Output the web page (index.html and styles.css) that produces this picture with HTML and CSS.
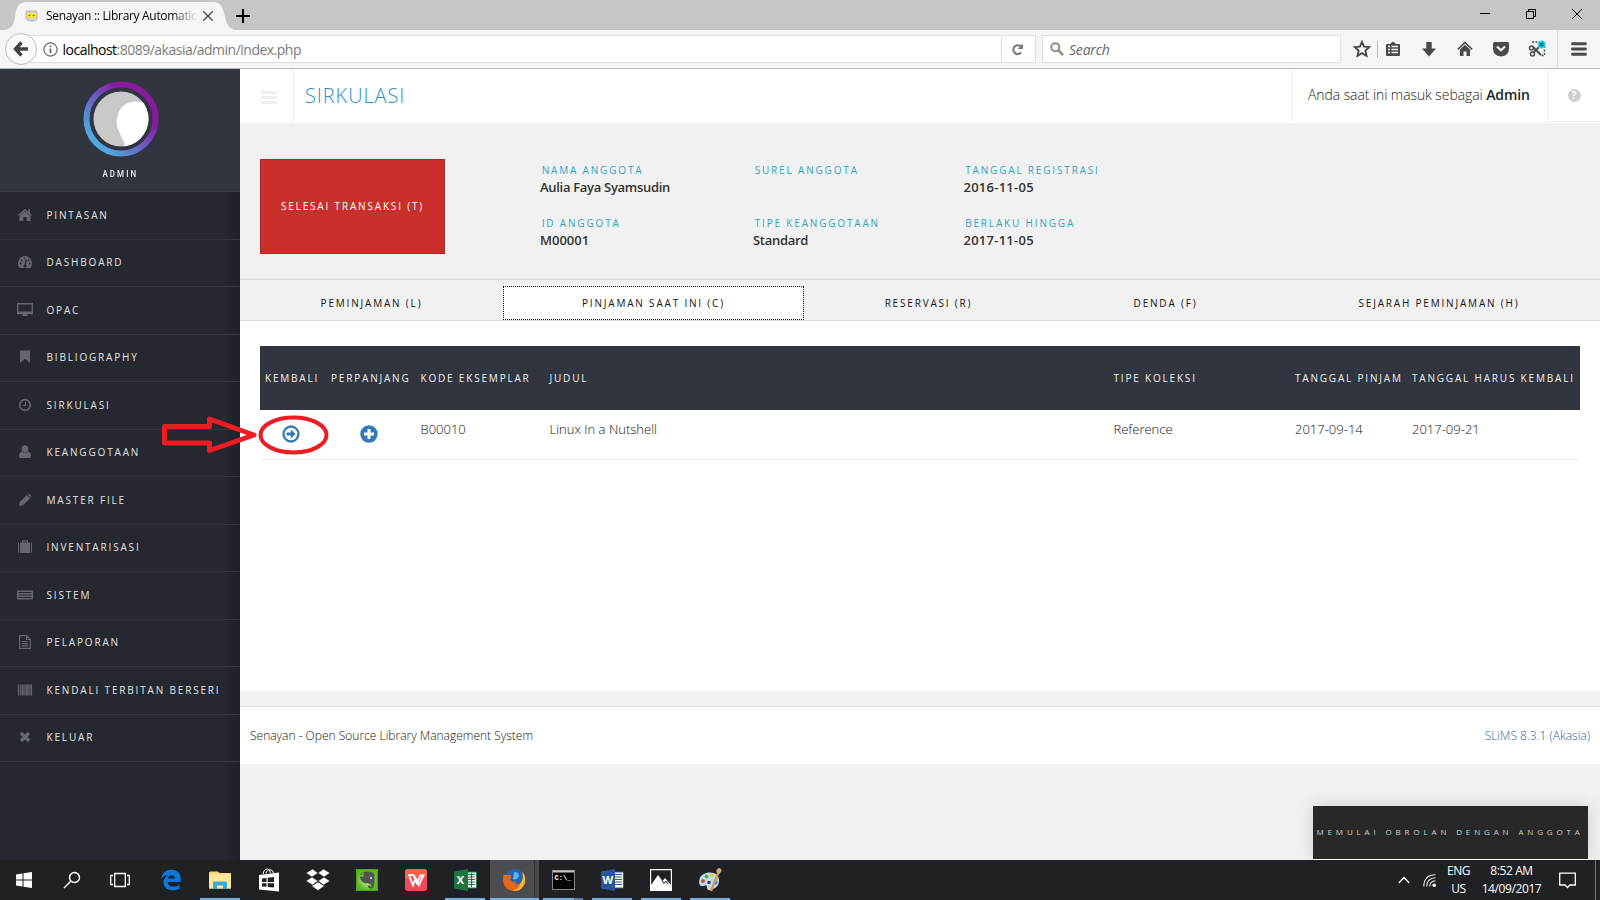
FILE: index.html
```html
<!DOCTYPE html>
<html lang="id">
<head>
<meta charset="utf-8">
<title>Senayan :: Library Automation</title>
<link rel="stylesheet" href="styles.css">
</head>
<body>
<div class="screen">

<header class="titlebar">
  <div class="tab">
    <svg class="tab-shape" width="234" height="30" viewBox="0 0 234 30"><path d="M4 30C12 29 14 24 15 17C16 8 18 2 27 2H213C221 2 223 8 225 17C227 25 229 29 237 30Z" fill="#f5f5f5"/></svg>
    <svg class="favicon" width="13" height="13" viewBox="0 0 13 13"><path d="M1 4Q1 1 3 2L10 2Q12 1 12 4V9Q12 12 6.500 12Q1 12 1 9Z" fill="#d8d3dc" stroke="#a9a3ae" stroke-width=".8"/><rect x="1.500" y="4" width="10" height="5" rx="2.300" fill="#f3ec22"/><circle cx="4.300" cy="6.500" r=".8" fill="#333"/><circle cx="8.700" cy="6.500" r=".8" fill="#333"/></svg>
    <span class="tab-title">Senayan :: Library Automatic</span>
    <svg class="tab-close" width="10" height="10" viewBox="0 0 10 10"><path d="M0 0L10 10M10 0L0 10" stroke="#444" stroke-width="1.300"/></svg>
  </div>
  <svg class="tab-new" width="14" height="14" viewBox="0 0 14 14"><path d="M7 0V14M0 7H14" stroke="#000" stroke-width="2.200"/></svg>
  <div class="window-buttons">
    <svg width="10" height="10" viewBox="0 0 10 10"><path d="M0 4.500H10" stroke="#000"/></svg>
    <svg width="10" height="10" viewBox="0 0 10 10"><path d="M.5 2.500H7.500V9.500H.5ZM2.500 2.500V.5H9.500V7.500H7.500" fill="none" stroke="#000"/></svg>
    <svg width="10" height="10" viewBox="0 0 10 10"><path d="M0 0L10 10M10 0L0 10" stroke="#000" stroke-width="1"/></svg>
  </div>
</header>

<nav class="navbar">
  <div class="back"><svg width="16" height="16" viewBox="0 0 16 16"><path d="M8.500 1.500L2.500 8L8.500 14.500M3 8H15" fill="none" stroke="#444" stroke-width="3.400"/></svg></div>
  <div class="address">
    <svg width="15" height="15" viewBox="0 0 15 15"><circle cx="7.500" cy="7.500" r="6.600" fill="none" stroke="#666" stroke-width="1.200"/><path d="M7.500 6.500V11M7.500 3.600V5.200" stroke="#666" stroke-width="1.700"/></svg>
    <span class="url"><b>localhost</b>:8089/akasia/admin/index.php</span>
    <div class="reload"><svg width="13" height="13" viewBox="0 0 13 13"><path d="M10.200 9.500A4.400 4.400 0 1 1 9.600 3.300" fill="none" stroke="#777" stroke-width="2.100"/><path d="M11.900 .6V6H6.600Z" fill="#777"/></svg></div>
  </div>
  <div class="search">
    <svg width="14" height="14" viewBox="0 0 14 14"><circle cx="5.300" cy="5.300" r="4" fill="none" stroke="#8d8d8d" stroke-width="2"/><path d="M8.200 8.200L13 13" stroke="#8d8d8d" stroke-width="2.600"/></svg>
    <span>Search</span>
  </div>
  <div class="tools">
    <svg width="18" height="18" viewBox="0 0 18 18"><path d="M9 1.800L11.100 6.600L16.200 7.100L12.400 10.600L13.500 15.800L9 13.100L4.500 15.800L5.600 10.600L1.800 7.100L6.900 6.600Z" fill="none" stroke="#4a4a4a" stroke-width="1.900"/></svg>
    <i class="sep"></i>
    <svg class="clip" width="18" height="18" viewBox="0 0 18 18"><path d="M2 5Q2 4 3 4H6L9 1.500L12 4H15Q16 4 16 5V15Q16 16 15 16H3Q2 16 2 15Z" fill="#4a4a4a"/><path d="M4 6.500H6M4 9.500H6M4 12.500H6M7.500 6.500H14M7.500 9.500H14M7.500 12.500H14" stroke="#f5f5f5" stroke-width="1.500"/></svg>
    <svg width="18" height="18" viewBox="0 0 18 18"><path d="M6.300 2H11.700V8.500H16L9 16.500L2 8.500H6.300Z" fill="#4a4a4a"/></svg>
    <svg width="18" height="18" viewBox="0 0 18 18"><path d="M1.800 9.500L9 2.500L16.200 9.500" fill="none" stroke="#4a4a4a" stroke-width="1.700"/><path d="M4 9.500L9 4.800L14 9.500V16H10.500V11.500H7.500V16H4Z" fill="#4a4a4a"/></svg>
    <svg width="18" height="18" viewBox="0 0 18 18"><path d="M2.500 2H15.500Q17 2 17 3.500V8Q17 16 9 16.500Q1 16 1 8V3.500Q1 2 2.500 2Z" fill="#4a4a4a"/><path d="M5 6.500L9 10.300L13 6.500" fill="none" stroke="#f5f5f5" stroke-width="2.200"/></svg>
    <svg width="18" height="18" viewBox="0 0 18 18"><path d="M4 2H12M16.500 6V15.500H13" fill="none" stroke="#4a4a4a" stroke-width="1.500" stroke-dasharray="2 1.500"/><path d="M5 7L13 15M12 6L5.500 12.500" stroke="#4a4a4a" stroke-width="1.900"/><circle cx="3.500" cy="8" r="2" fill="none" stroke="#4a4a4a" stroke-width="1.500"/><circle cx="4.500" cy="14" r="2" fill="none" stroke="#4a4a4a" stroke-width="1.500"/><circle cx="13.700" cy="4.500" r="4" fill="#25e0ee"/><path d="M13.700 1.800V7.200M11.300 3.200L16.100 5.800M16.100 3.200L11.300 5.800" stroke="#146a80" stroke-width="1.500"/></svg>
  </div>
  <div class="menu-button"><svg width="16" height="14" viewBox="0 0 16 14"><path d="M1.500 1.700H14.500M1.500 7H14.500M1.500 12.300H14.500" stroke="#4a4a4a" stroke-width="2.900" stroke-linecap="round"/></svg></div>
</nav>

<div class="page">
  <aside class="sidebar">
    <div class="user">
      <svg width="76" height="76" viewBox="0 0 76 76">
        <defs><linearGradient id="ring" x1=".15" y1=".85" x2=".8" y2=".2"><stop offset="0" stop-color="#4fa9e0"/><stop offset=".5" stop-color="#6a5cc0"/><stop offset=".85" stop-color="#8a1aa2"/></linearGradient><clipPath id="face"><circle cx="38" cy="38" r="27.500"/></clipPath></defs>
        <circle cx="38" cy="38" r="34.500" fill="none" stroke="url(#ring)" stroke-width="6"/>
        <circle cx="38" cy="38" r="27.500" fill="#c8c8c8"/>
        <path clip-path="url(#face)" d="M68 25Q57 19 48 21Q36 24 34.500 36Q33.500 39 33.500 42Q34 47 36 50Q38 57 41.500 61.500L41 68H70Z" fill="#fff"/>
      </svg>
      <span>ADMIN</span>
    </div>
    <ul class="menu">
      <li><svg viewBox="0 0 16 16"><path d="M8 4L13.500 9V14H9.700V10H6.300V14H2.500V9Z"/><path d="M1.500 8.500L8 2.800L14.500 8.500M12.300 2V6" fill="none" stroke="#64676d" stroke-width="1.500"/></svg>PINTASAN</li>
      <li><svg viewBox="0 0 16 16"><path d="M1 9A7 7 0 0 1 15 9Q15 12 13.500 14H2.500Q1 12 1 9Z"/><path d="M8 12L9.200 5.500" stroke="#25282f" stroke-width="1.300"/><g fill="#25282f"><circle cx="8" cy="12" r="1.500"/><circle cx="3.500" cy="9.500" r=".9"/><circle cx="4.700" cy="6.200" r=".9"/><circle cx="7.500" cy="4.300" r=".8"/><circle cx="11.600" cy="6.200" r=".9"/><circle cx="12.700" cy="9.500" r=".9"/></g></svg>DASHBOARD</li>
      <li><svg viewBox="0 0 16 16"><path d="M.7 1.700H15.300V11.500H.7Z" fill="none" stroke="#64676d" stroke-width="1.400"/><path d="M.7 9.500H15.300V12H.7ZM6 12H10L11 14H5Z"/></svg>OPAC</li>
      <li><svg viewBox="0 0 16 16"><path d="M3 1.500H13V14L8 9.700L3 14Z"/></svg>BIBLIOGRAPHY</li>
      <li><svg viewBox="0 0 16 16"><circle cx="8" cy="8" r="5.300" fill="none" stroke="#64676d" stroke-width="1.700"/><path d="M8.500 4.800V8.500H5.800" fill="none" stroke="#64676d" stroke-width="1.200"/></svg>SIRKULASI</li>
      <li><svg viewBox="0 0 16 16"><ellipse cx="8" cy="5" rx="3.300" ry="3.800"/><path d="M4.800 7.500Q8 10.500 11.200 7.500Q14 8.500 14 12Q14 14 12 14H4Q2 14 2 12Q2 8.500 4.800 7.500Z"/></svg>KEANGGOTAAN</li>
      <li><svg viewBox="0 0 16 16"><path d="M2 14L2.700 10L9.800 3L13 6.200L6 13.200ZM10.600 2.200Q11.600 1.200 12.600 2.200L13.800 3.400Q14.800 4.400 13.800 5.400Z"/></svg>MASTER FILE</li>
      <li><svg viewBox="0 0 16 16"><path d="M1 4Q1 3.500 2 3.500V14Q1 14 1 13ZM3 3.500H5V1.300H11V3.500H13V14H3ZM14 3.500Q15 3.500 15 4V13Q15 14 14 14ZM6.200 2.500V3.500H9.800V2.500Z" fill-rule="evenodd"/></svg>INVENTARISASI</li>
      <li><svg viewBox="0 0 16 16"><path d="M0 3.500H16V12.500H0Z"/><path d="M1.500 5.500H14.500M1.500 8H14.500M1.500 10.500H14.500" stroke="#25282f" stroke-width="1"/></svg>SISTEM</li>
      <li><svg viewBox="0 0 16 16"><path d="M2.600 1.600H9.500L13.400 5.500V14.400H2.600ZM9.500 1.600V5.500H13.400M5 7.500H11M5 9.700H11M5 11.900H11" fill="none" stroke="#64676d" stroke-width="1.200"/></svg>PELAPORAN</li>
      <li><svg viewBox="0 0 16 16"><path d="M1.500 2.500V13.500M3.700 2.500V13.500M8 2.500V13.500M12 2.500V13.500" stroke="#64676d" stroke-width="1.300"/><path d="M5.800 2.500V13.500M10 2.500V13.500M14.200 2.500V13.500" stroke="#64676d" stroke-width="1.700"/></svg>KENDALI TERBITAN BERSERI</li>
      <li><svg viewBox="0 0 16 16"><path d="M4 4L12 12M12 4L4 12" stroke="#64676d" stroke-width="3.600"/></svg>KELUAR</li>
    </ul>
  </aside>

  <main class="main">
    <div class="topbar">
      <div class="toggle"><i></i><i></i><i></i></div>
      <h1>SIRKULASI</h1>
      <div class="login">Anda saat ini masuk sebagai <b>Admin</b></div>
      <div class="help"><span>?</span></div>
    </div>
    <section class="member">
      <button class="finish">SELESAI TRANSAKSI (T)</button>
      <dl class="info">
        <div><dt>NAMA ANGGOTA</dt><dd>Aulia Faya Syamsudin</dd></div>
        <div><dt>SUREL ANGGOTA</dt><dd></dd></div>
        <div><dt>TANGGAL REGISTRASI</dt><dd class="num">2016-11-05</dd></div>
        <div><dt>ID ANGGOTA</dt><dd class="code">M00001</dd></div>
        <div><dt>TIPE KEANGGOTAAN</dt><dd>Standard</dd></div>
        <div><dt>BERLAKU HINGGA</dt><dd class="num">2017-11-05</dd></div>
      </dl>
    </section>
    <div class="tabs">
      <a>PEMINJAMAN (L)</a><a class="active">PINJAMAN SAAT INI (C)</a><a>RESERVASI (R)</a><a>DENDA (F)</a><a>SEJARAH PEMINJAMAN (H)</a>
    </div>
    <section class="loans">
      <div class="row head"><span>KEMBALI</span><span>PERPANJANG</span><span>KODE EKSEMPLAR</span><span>JUDUL</span><span>TIPE KOLEKSI</span><span>TANGGAL PINJAM</span><span>TANGGAL HARUS KEMBALI</span></div>
      <div class="row item">
        <span class="act"><svg width="18" height="18" viewBox="0 0 18 18"><circle cx="9" cy="9" r="7.500" fill="none" stroke="#337ab7" stroke-width="2.300"/><path d="M4.500 7.500H8.800V4.600L13.600 9L8.800 13.400V10.500H4.500Z" fill="#337ab7"/></svg></span>
        <span class="act"><svg width="18" height="18" viewBox="0 0 18 18"><circle cx="9" cy="9" r="8.700" fill="#337ab7"/><path d="M9 4V14M4 9H14" stroke="#fff" stroke-width="3"/></svg></span>
        <span>B00010</span><span>Linux In a Nutshell</span><span>Reference</span><span>2017-09-14</span><span>2017-09-21</span>
      </div>
    </section>
    <footer class="footer"><span>Senayan - Open Source Library Management System</span><a>SLiMS 8.3.1 (Akasia)</a></footer>
  </main>

  <div class="chat">MEMULAI OBROLAN DENGAN ANGGOTA</div>
</div>

<div class="taskbar">
  <div class="cell sys"><svg width="18" height="18" viewBox="0 0 18 18"><path d="M1 3.500L7.500 2.500V8.500H1ZM8.500 2.300L17 1V8.500H8.500ZM1 9.500H7.500V15.500L1 14.500ZM8.500 9.500H17V17L8.500 15.700Z" fill="#fff"/></svg></div>
  <div class="cell sys"><svg width="18" height="18" viewBox="0 0 18 18"><circle cx="11.500" cy="6.500" r="5" fill="none" stroke="#fff" stroke-width="1.400"/><path d="M8 10L1 17" stroke="#fff" stroke-width="1.500"/></svg></div>
  <div class="cell sys"><svg width="20" height="16" viewBox="0 0 20 16"><path d="M4.700 1.500H15.300V14.500H4.700ZM3 3.500H.7V12.500H3M17 3.500H19.300V12.500H17" fill="none" stroke="#fff" stroke-width="1.300"/></svg></div>
  <div class="cell first"><svg width="22" height="22" viewBox="0 0 22 22"><path d="M1 10C2 4 6 .8 11.500 .8C18 .8 21 5.500 20.800 11V13H7.800C8 18 14 19 19.500 16V20C12 23 3.500 21 3.500 13.500C3.500 9.500 6 7 8.500 6C4.500 6 2.500 8 1 10ZM8 9.500H14.800C14.800 5 9 5 8 9.500Z" fill="#0a78d6" fill-rule="evenodd"/></svg></div>
  <div class="cell run"><svg width="22" height="18" viewBox="0 0 22 18"><path d="M0 2Q0 .5 1.500 .5H9L10.500 2H22V17.500H0Z" fill="#fbd978"/><path d="M1 3H22V17.500H0V4Z" fill="#fee79a"/><path d="M4 18V11.500Q4 10.500 5 10.500H17Q18 10.500 18 11.500V18H14V14.500H8V18Z" fill="#35a8dc"/></svg></div>
  <div class="cell"><svg width="22" height="24" viewBox="0 0 22 24"><path d="M5 6Q6 .7 9.500 1Q12 1.300 12.500 5M8 5.500Q9 1.500 12.500 1.800Q15 2 15.500 5" fill="none" stroke="#fff" stroke-width="1"/><path d="M1 7L21 4.500V23.500L1 21.500Z" fill="#fff"/><path d="M4 10.500L8.500 10V14H4ZM9.700 9.800L16 9V14H9.700ZM4 15.200H8.500V18.800L4 18.500ZM9.700 15.200H16V19.500L9.700 18.900Z" fill="#202225"/></svg></div>
  <div class="cell"><svg width="24" height="24" viewBox="0 0 24 24"><path d="M6.500 1L12 5L6 9L0 5ZM17.500 1L12 5L18 9L24 5ZM0 13L6 9L12 13L6.500 17ZM24 13L18 9L12 13L17.500 17ZM5.500 18L12 14L18.500 18L12 22.500Z" fill="#fff" stroke="#202225" stroke-width=".6"/></svg></div>
  <div class="cell"><svg width="22" height="22" viewBox="0 0 22 22"><defs><radialGradient id="leaf"><stop offset="0" stop-color="#d6f5b4"/><stop offset="1" stop-color="#5cba22"/></radialGradient></defs><rect width="22" height="22" fill="#4ba314"/><rect x="1" y="1" width="20" height="20" fill="url(#leaf)"/><path d="M7.500 2.500H12Q18 2.500 18.500 6V13Q18.500 19.500 15 19.500Q11.500 19.500 12 16.500H13.700Q14 18 15.300 17.500V16L11.500 14L9.500 14.500Q4.500 13 3.800 7.500H6.500Q7.500 7.500 7.500 6Z" fill="#55544c"/><path d="M4 6L6.500 3V6Z" fill="#55544c"/><circle cx="15" cy="9" r="1" fill="#eee"/></svg></div>
  <div class="cell"><svg width="22" height="22" viewBox="0 0 22 22"><rect width="22" height="22" rx="3" fill="#f8485a"/><path d="M0 10V3Q0 0 3 0H19Q22 0 22 3V7Z" fill="#fa6348"/><path d="M3 6H8.500L12 14L15.500 6.500H18.500L13.800 16L10.800 9.500L8 16L4.500 7.500" fill="none" stroke="#fff" stroke-width="1.900"/></svg></div>
  <div class="cell run"><svg width="23" height="22" viewBox="0 0 23 22"><path d="M12 3H22.500V19H12Z" fill="#fff" stroke="#217346"/><path d="M14 5.500H21M14 8H21M14 10.500H21M14 13H21M14 15.500H21M17.500 4V18" stroke="#217346" stroke-width="1.200"/><path d="M0 2.500L14 0V22L0 19.500Z" fill="#1f7244"/><text x="2.800" y="15" class="letter">X</text></svg></div>
  <div class="cell run hot"><svg width="24" height="24" viewBox="0 0 24 24"><circle cx="12.500" cy="11.500" r="10.500" fill="#2465ae"/><path d="M12 4Q17 4 17 8Q15 13 11 11Z" fill="#58b6e8"/><path d="M2 5Q1 6 3 7L8 7Q10 7 9 10Q7 11 9 13Q11 15 14 13Q12 17 17 16Q23 13 20 3Q25 9 22.500 16Q19 24 11 23Q1 21 1 12Q1 8 2 5Z" fill="#e8661b"/><path d="M18 16Q22 12 20.500 4Q25 10 22 17Q18 24 11 22.500Q17 21 18 16Z" fill="#fbb92c"/></svg></div>
  <div class="cell run multi"><svg width="23" height="20" viewBox="0 0 23 20"><rect x=".5" y=".5" width="22" height="19" fill="#050505" stroke="#858585"/><path d="M1 1.500H22" stroke="#c5c5c5" stroke-width="2"/><text x="2.500" y="9.500" class="prompt">C:\_</text></svg></div>
  <div class="cell run"><svg width="23" height="22" viewBox="0 0 23 22"><path d="M12 3H22.500V19H12Z" fill="#fff" stroke="#2b579a"/><path d="M13 5.500H21M13 8H21M13 10.500H21M13 13H21M13 15.500H21" stroke="#2b579a" stroke-width="1.200"/><path d="M0 2.500L14 0V22L0 19.500Z" fill="#2a5699"/><text x="1.500" y="15" class="letter">W</text></svg></div>
  <div class="cell run"><svg width="22" height="22" viewBox="0 0 22 22"><path d="M.6 .6H21.400V21.400H.6Z" fill="none" stroke="#fff" stroke-width="1.200"/><path d="M1 16L8 6L12.500 12L15 9L21 16V21H1Z" fill="#fff"/><path d="M12 11.500L14 14.500L16 12L18 15" fill="none" stroke="#202225" stroke-width="1"/></svg></div>
  <div class="cell run"><svg width="24" height="24" viewBox="0 0 24 24"><path d="M1 14Q1 6 10 4.500Q20 3.500 21 11Q22 19 13 22Q9 23 9 19Q9 16 6 18Q1 19 1 14Z" fill="#bcdcf0"/><circle cx="5" cy="13" r="2" fill="#d94535"/><circle cx="8.500" cy="8.500" r="2" fill="#4fae4b"/><circle cx="14" cy="7" r="2" fill="#f3c52c"/><circle cx="11" cy="14.500" r="1.800" fill="#26435e"/><circle cx="17.500" cy="14.500" r="2" fill="#3679c8"/><path d="M21 3L13 23" stroke="#d9954b" stroke-width="2.400"/><path d="M18.500 4Q18 1 21 0Q24 1 23.500 3Q22 6 20.500 6Z" fill="#d2a77e"/></svg></div>

  <div class="tray">
    <svg width="12" height="8" viewBox="0 0 12 8"><path d="M.8 7L6 1.500L11.200 7" fill="none" stroke="#fff" stroke-width="1.500"/></svg>
    <svg class="wifi" width="13" height="13" viewBox="0 0 13 13"><g fill="none" stroke="#eee" stroke-width="1.100"><path d="M12.500 .8Q1 1 .8 12.500"/><path d="M12.500 3.800Q4 4 3.800 12.500"/><path d="M12.500 6.800Q7 7 6.800 12.500"/></g><circle cx="11.200" cy="11.200" r="1.700" fill="#fff"/></svg>
    <div class="lang">ENG<br>US</div>
    <div class="clock">8:52 AM<br>14/09/2017</div>
    <svg class="note" width="17" height="17" viewBox="0 0 17 17"><path d="M.7 1.200H16.300V13H11L8.500 15.500L6 13H.7Z" fill="none" stroke="#fff" stroke-width="1.300"/></svg>
    <i class="peek"></i>
  </div>
</div>

<svg class="marker" width="172" height="44" viewBox="0 0 172 44"><g fill="none" stroke="#eb1c24" stroke-linejoin="round"><path d="M4.500 13.500H49.500V6L94 22L49.500 37.500V30H4.500Z" stroke-width="5"/><ellipse cx="133.500" cy="22" rx="33" ry="17.500" stroke-width="4"/></g></svg>
</div>
</body>
</html>
```
FILE: styles.css
```css
* { box-sizing: border-box; }
body, h1, ul, dl, dd { margin: 0; padding: 0; }
body { font-family: "Open Sans", "Noto Sans", sans-serif; font-size: 13px; color: #333; overflow: hidden; }
svg { display: block; flex: none; }
.screen { position: relative; width: 1600px; height: 900px; display: flex; flex-direction: column; }

/* browser chrome */
.titlebar { height: 30px; background: #c6c6c6; display: flex; align-items: center; }
.tab { position: relative; width: 234px; height: 30px; display: flex; align-items: center; padding: 1px 0 0 25px; }
.tab-shape { position: absolute; left: 0; top: 0; }
.favicon, .tab-title, .tab-close { position: relative; }
.tab-title { width: 151px; margin-left: 8px; overflow: hidden; white-space: nowrap; font-size: 12px; letter-spacing: -.32px; color: #000; -webkit-mask-image: linear-gradient(90deg, #000 83%, transparent); mask-image: linear-gradient(90deg, #000 83%, transparent); }
.tab-close { margin-left: 6px; }
.tab-new { margin: 2px 0 0 2px; }
.window-buttons { margin-left: auto; display: flex; gap: 36px; padding: 0 18px 2px 0; }
.navbar { height: 39px; background: #f5f5f5; border-bottom: 1px solid #b8b8b8; display: flex; align-items: center; }
.back { width: 32px; height: 32px; margin-left: 5px; border: 1px solid #bdbdbd; border-radius: 50%; display: flex; align-items: center; justify-content: center; background: #fafafa; flex: none; z-index: 1; }
.address { width: 1009px; height: 28px; margin-left: -10px; padding-left: 14.500px; background: #fff; border: 1px solid #dedede; display: flex; align-items: center; }
.url { margin: 1px 0 0 5px; font-size: 14px; letter-spacing: -.51px; color: #7a7a7a; }
.url b { font-weight: 400; color: #000; }
.reload { margin-left: auto; width: 34px; height: 26px; border-left: 1px solid #dedede; display: flex; align-items: center; justify-content: center; padding-right: 2px; }
.search { width: 299px; height: 28px; margin-left: 6px; padding-left: 7px; background: #fff; border: 1px solid #dedede; display: flex; align-items: center; gap: 5px; font-size: 14px; font-style: italic; letter-spacing: -.2px; color: #666; }
.search span { padding-top: 1px; }
.tools { display: flex; align-items: center; margin-left: 12px; gap: 18px; }
.tools .sep { width: 1px; height: 17px; background: #bbb; margin-left: -12px; }
.tools .clip { margin-left: -12px; }
.menu-button { height: 38px; margin-left: auto; width: 43px; border-left: 1px solid #ddd; display: flex; align-items: center; justify-content: center; }

/* application */
.page { position: relative; height: 791px; display: flex; background: #f1f1f1; }
.sidebar { width: 240px; background: linear-gradient(90deg, #25282f 93%, #1e2127); flex: none; }
.user { height: 123px; padding: 12px 0 0 1px; background: #31353f; border-bottom: 1px solid #373b44; display: flex; flex-direction: column; align-items: center; color: #eee; }
.user span { margin: 10px 0 0 0; font: 500 9.500px/14px Roboto, sans-serif; letter-spacing: 2.500px; transform: scaleX(.84); }
.menu { list-style: none; font-size: 10px; letter-spacing: 1.830px; color: #e4e4e4; }
.menu li { height: 47.540px; border-bottom: 1px solid #34373f; display: flex; align-items: center; padding: 0 0 1.500px 17px; gap: 13.500px; white-space: nowrap; }
.menu svg { width: 16px; height: 16px; fill: #64676d; }
.main { width: 1360px; }
.topbar { height: 54px; background: #fff; display: flex; }
.toggle { width: 54px; padding: 22px 0 0 21px; border-right: 1px solid #efefef; }
.toggle i { display: block; width: 16px; height: 3px; margin-bottom: 2px; background: #efefef; border-radius: 1px; }
h1 { padding-left: 11px; font-size: 20px; line-height: 54px; font-weight: 300; letter-spacing: .92px; color: #2b8fc6; }
.login { margin-left: auto; width: 256px; height: 52px; border-left: 1px solid #efefef; padding-left: 16px; line-height: 52px; font-size: 14px; letter-spacing: -.08px; font-weight: 300; white-space: nowrap; color: #222; }
.login b { font-weight: 600; }
.help { width: 53px; height: 53px; border-left: 1px solid #efefef; border-bottom: 1px solid #efefef; display: flex; align-items: center; justify-content: center; }
.help span { width: 13px; height: 13px; border-radius: 50%; background: #cfcfcf; color: #fff; font: bold 10px/13px "Open Sans", sans-serif; text-align: center; }
.member { height: 156px; padding: 36px 0 0 20px; display: flex; }
.finish { width: 185px; height: 95px; padding: 0 0 2px; border: 1px solid #ac2925; background: #c9302c; color: #fff; font: 10px "Open Sans", sans-serif; letter-spacing: 1.830px; white-space: nowrap; }
.info { margin: 2px 0 0 95px; display: grid; grid-template-columns: 213px 210.500px 200px; grid-auto-rows: 53px; align-content: start; }
.info dt { padding-left: 1.700px; font-size: 10px; line-height: 18px; letter-spacing: 1.830px; color: #2fa4bf; white-space: nowrap; }
.info dd { font-size: 13px; line-height: 17px; font-weight: 600; letter-spacing: -.3px; }
.info .num { letter-spacing: .25px; }
.info .code { letter-spacing: 0; }
.tabs { height: 42px; border-top: 1px solid #dadada; border-bottom: 1px solid #dadada; display: grid; grid-template-columns: 263px 301px 249px 225px 322px; padding-top: 6px; font-size: 10px; letter-spacing: 1.810px; color: #111; text-align: center; line-height: 35px; }
.tabs .active { height: 34px; line-height: 33px; background: #fff; border: 1px dotted #000; }
.loans { height: 370px; padding: 25px 20px 0; background: #fff; }
.row { display: grid; grid-template-columns: 66px 89.500px 129px 564px 181.500px 117px 1fr; padding-left: 5px; white-space: nowrap; }
.head { height: 64px; background: #31353f; color: #f2f2f2; font-size: 10px; line-height: 65px; letter-spacing: 1.810px; }
.item { height: 50px; border-bottom: 1px solid #eee; font-size: 13px; font-weight: 300; line-height: 38px; color: #111; }
.act { padding: 15px 0 0 17px; }
.act + .act { padding-left: 28.500px; }
.footer { height: 58px; margin-top: 15px; padding: 0 10px; background: #fff; border-top: 1px solid #dadada; display: flex; justify-content: space-between; align-items: center; font-size: 12px; font-weight: 300; color: #111; }
.footer a { color: #1d66a8; }
.chat { position: absolute; right: 12px; bottom: 1px; width: 275px; height: 53px; padding-left: 3.500px; background: #282828; color: #ccc; font-size: 8px; line-height: 52px; letter-spacing: 3.850px; white-space: nowrap; box-shadow: 0 1px 0 #fff, 0 0 18px rgba(0, 0, 0, .15); }

/* desktop taskbar */
.taskbar { position: relative; height: 40px; background: #1f2124; display: flex; color: #fff; }
.cell { width: 49px; display: flex; align-items: center; justify-content: center; position: relative; }
.cell.sys { width: 48px; }
.cell.first { margin-left: 2.500px; }
.run::after { content: ""; position: absolute; left: 4.500px; right: 4.500px; bottom: 0; height: 2px; background: #76b1e6; }
.hot { background: linear-gradient(90deg, #4b4d50 44px, #333 44px, #333 45px, #46484b 45px); }
.hot::after { left: 0; right: 0; }
.multi::after { background: linear-gradient(90deg, #76b1e6 31px, #517fa9 31px); }
.letter { font: bold 11px "Open Sans", sans-serif; fill: #fff; }
.prompt { font: bold 7px "Liberation Mono", monospace; fill: #fff; }
.tray { margin-left: auto; display: flex; align-items: center; font-size: 12px; line-height: 18px; letter-spacing: -.4px; text-align: center; }
.wifi { margin-left: 13px; }
.lang { width: 45px; }
.clock { width: 61px; white-space: nowrap; }
.note { margin-left: 17px; }
.peek { width: 1px; height: 40px; margin: 0 4px 0 19px; background: #777; }

/* annotation over the return button */
.marker { position: absolute; left: 160px; top: 412.500px; }
```
